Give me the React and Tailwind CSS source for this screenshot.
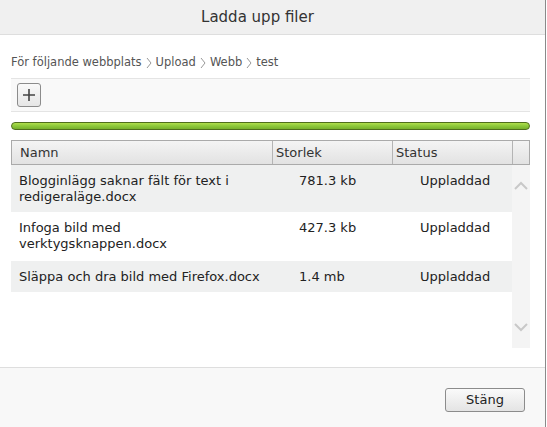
import React from 'react';

const files = [
  { name: ['Blogginlägg saknar fält för text i', 'redigeraläge.docx'], size: '781.3 kb', status: 'Uppladdad' },
  { name: ['Infoga bild med', 'verktygsknappen.docx'], size: '427.3 kb', status: 'Uppladdad' },
  { name: ['Släppa och dra bild med Firefox.docx'], size: '1.4 mb', status: 'Uppladdad' },
];

function Chevron({ dir }) {
  return (
    <svg width="14" height="10" viewBox="0 0 14 10" className="text-[#c8c8c8]">
      {dir === 'up'
        ? <path d="M1 8 L7 2 L13 8" fill="none" stroke="currentColor" strokeWidth="2" />
        : <path d="M1 2 L7 8 L13 2" fill="none" stroke="currentColor" strokeWidth="2" />}
    </svg>
  );
}

function Sep() {
  return (
    <svg width="8" height="12" viewBox="0 0 8 12" className="mx-[3px] text-[#999]">
      <path d="M2 1 L6 6 L2 11" fill="none" stroke="currentColor" strokeWidth="1" />
    </svg>
  );
}

export default function App() {
  return (
    <div className="w-[547px] h-[427px] bg-white flex font-['DejaVu_Sans',Verdana,sans-serif] text-[#222]">
      <div className="w-[546px] h-full border-r border-[#8a8a8a] flex flex-col">
        {/* Titel */}
        <div className="h-[35px] shrink-0 bg-[#f0f0f0] border-b border-[#dedede] flex items-center justify-center pr-[30px]">
          <h1 className="text-[15px] text-[#333] pt-[1px]">Ladda upp filer</h1>
        </div>

        {/* Innehåll */}
        <div className="flex-1 pl-[11px] pr-[15px] flex flex-col">
          <div className="pt-[20px] pb-[8px] border-b border-[#e4e4e4] flex items-center text-[11.5px] text-[#555] leading-[15px]">
            För följande webbplats <Sep /> Upload <Sep /> Webb <Sep /> test
          </div>

          <div className="h-[33px] bg-[#f9f9f9] border-b border-[#e4e4e4] flex items-center pl-[6px]">
            <button className="w-[24px] h-[24px] rounded-[3px] border border-[#8c8c8c] bg-gradient-to-b from-[#fafafa] to-[#e6e6e6] flex items-center justify-center">
              <svg width="14" height="14" viewBox="0 0 14 14">
                <path d="M7 1 V13 M1 7 H13" stroke="#444" strokeWidth="1.6" />
              </svg>
            </button>
          </div>

          <div className="mt-[10px] h-[8px] rounded-full border border-[#4f6e1c] bg-gradient-to-b from-[#b0df4c] via-[#8cc83a] to-[#78b02c]" />

          <div className="mt-[10px] flex">
            <div className="flex-1 flex flex-col">
              <div className="h-[25px] flex border border-[#aaa] bg-gradient-to-b from-[#f4f4f4] to-[#e2e2e2] text-[13px] text-[#333]">
                <div className="w-[261px] border-r border-[#b4b4b4] pl-[8px] flex items-center">Namn</div>
                <div className="w-[120px] border-r border-[#b4b4b4] pl-[3px] flex items-center">Storlek</div>
                <div className="w-[120px] border-r border-[#b4b4b4] pl-[3px] flex items-center">Status</div>
                <div className="flex-1" />
              </div>
              <div className="flex">
                <div className="w-[501px] flex flex-col text-[13px] leading-[16px]">
                  {files.map((f, i) => (
                    <div key={f.name[0]} className={`flex pt-[8px] ${i === 1 ? 'pb-[9px]' : 'pb-[7px]'} ${i % 2 === 0 ? 'bg-[#eff0f0]' : 'bg-white'}`}>
                      <div className="w-[288px] pl-[8px] pr-[4px]">
                        {f.name.map(line => <div key={line}>{line}</div>)}
                      </div>
                      <div className="w-[121px]">{f.size}</div>
                      <div className="flex-1">{f.status}</div>
                    </div>
                  ))}
                </div>
                <div className="flex-1 h-[183px] bg-[#f4f4f4] flex flex-col items-center justify-between pt-[16px] pb-[16px]">
                  <Chevron dir="up" />
                  <Chevron dir="down" />
                </div>
              </div>
            </div>
          </div>
        </div>

        {/* Sidfot */}
        <div className="h-[60px] shrink-0 border-t border-[#dedede] bg-[#f8f8f8] flex justify-end pt-[20px] pr-[20px]">
          <button className="w-[80px] h-[24px] rounded-[3px] border border-[#8c8c8c] bg-gradient-to-b from-[#fafafa] to-[#e4e4e4] text-[13px] text-[#222]">
            Stäng
          </button>
        </div>
      </div>
    </div>
  );
}
